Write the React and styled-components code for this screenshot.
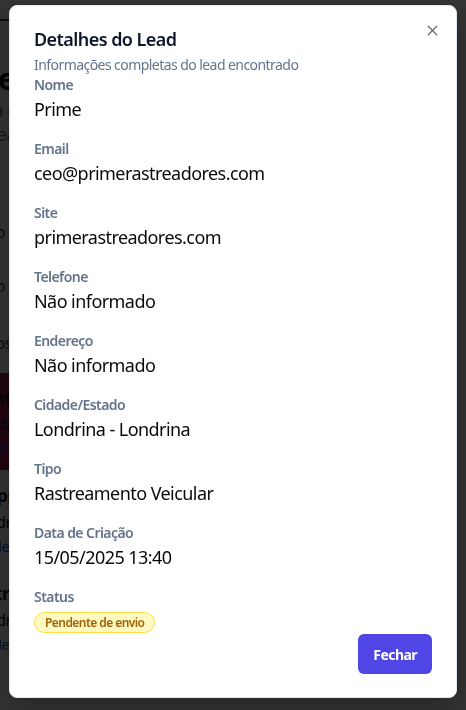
import React from 'react';
import styled, { createGlobalStyle } from 'styled-components';
import { X } from 'lucide-react';

const GlobalStyle = createGlobalStyle`
	* { box-sizing: border-box; }
	html, body {
		margin: 0;
		padding: 0;
		background: #ffffff;
		font-family: 'Noto Sans', 'Open Sans', sans-serif;
		letter-spacing: -0.035em;
		overflow: hidden;
	}
`;

// página de fundo (fica atrás do overlay)
const Page = styled.div`
	width: 466px;
	height: 710px;
	margin-left: -30px;
	display: flex;
	flex-direction: column;
	color: #0f172a;
`;
const TopBar = styled.div`
	height: 21px;
	border-bottom: 2px solid #166534;
`;
const PageHead = styled.div`
	padding: 40px 0 0 0;
	display: flex;
	flex-direction: column;
	gap: 2px;
`;
const PageTitle = styled.div`
	font-size: 30px;
	font-weight: 700;
	line-height: 36px;
`;
const PageSub = styled.div`
	font-size: 18px;
	color: #64748b;
	line-height: 22px;
`;
const Row = styled.div`
	height: ${props => props.h || 54}px;
	display: flex;
	align-items: center;
	justify-content: space-between;
	border-bottom: 1px solid #e2e8f0;
	font-size: 16px;
	color: #334155;
`;
const Card = styled.div`
	display: flex;
	flex-direction: column;
	padding: 12px 0;
	gap: 4px;
	background: ${props => props.bg || 'transparent'};
	border-bottom: 1px solid #e2e8f0;
	font-size: 16px;
	span:first-child {
		font-weight: 700;
		font-size: 18px;
	}
	span:last-child {
		color: #1d4ed8;
		font-size: 14px;
	}
`;
const Overlay = styled.div`
	position: fixed;
	inset: 0;
	background: rgba(0, 0, 0, 0.8);
`;

// modal
const Dialog = styled.div`
	position: fixed;
	left: 9px;
	top: 5px;
	width: 448px;
	height: 693px;
	background: #ffffff;
	border: 1px solid #e2e8f0;
	border-radius: 8px;
	box-shadow: 0 10px 25px rgba(0, 0, 0, 0.25);
	padding: 22px 24px 23px 24px;
	display: flex;
	flex-direction: column;
`;
const CloseBtn = styled.button`
	position: absolute;
	top: 15px;
	right: 15px;
	width: 18px;
	height: 18px;
	padding: 0;
	border: none;
	background: transparent;
	color: #3f3f46;
	opacity: 0.8;
	display: flex;
	align-items: center;
	justify-content: center;
`;
const Header = styled.div`
	display: flex;
	flex-direction: column;
	gap: 5px;
`;
const Title = styled.h2`
	margin: 0;
	font-size: 18px;
	line-height: 22px;
	font-weight: 600;
	color: #0f172a;
`;
const Description = styled.p`
	margin: 0;
	font-size: 14px;
	line-height: 20px;
	color: #64748b;
`;
const Fields = styled.div`
	display: flex;
	flex-direction: column;
	gap: 16px;
`;
const Field = styled.div`
	display: flex;
	flex-direction: column;
`;
const Label = styled.div`
	font-size: 14px;
	line-height: 20px;
	font-weight: 600;
	color: #64748b;
`;
const Value = styled.div`
	font-size: 18px;
	line-height: 28px;
	color: #0a0a0a;
`;
const Badge = styled.span`
	display: inline-flex;
	align-self: flex-start;
	align-items: center;
	margin-top: 5px;
	height: 21px;
	padding: 0 10px;
	border-radius: 999px;
	border: 1px solid #fde047;
	background: #fef9c3;
	color: #a16207;
	font-size: 12px;
	font-weight: 600;
`;
const Footer = styled.div`
	margin-top: auto;
	display: flex;
	justify-content: flex-end;
`;
const Button = styled.button`
	height: 40px;
	padding: 0 15px;
	border: none;
	border-radius: 6px;
	background: #4f46e5;
	color: #ffffff;
	font-family: inherit;
	letter-spacing: inherit;
	font-size: 14px;
	font-weight: 700;
`;

const lead = [
	{ label: 'Nome', value: 'Prime' },
	{ label: 'Email', value: 'ceo@primerastreadores.com' },
	{ label: 'Site', value: 'primerastreadores.com' },
	{ label: 'Telefone', value: 'Não informado' },
	{ label: 'Endereço', value: 'Não informado' },
	{ label: 'Cidade/Estado', value: 'Londrina - Londrina' },
	{ label: 'Tipo', value: 'Rastreamento Veicular' },
	{ label: 'Data de Criação', value: '15/05/2025 13:40' },
];

function App() {
	return (
		<>
			<GlobalStyle />
			<Page>
				<TopBar />
				<PageHead>
					<PageTitle>Meus Leads</PageTitle>
					<PageSub>Veja e gerencie</PageSub>
					<PageSub>os leads encontrados</PageSub>
				</PageHead>
				<Row h={60} />
				<Row>
					<span>Filtro</span>
					<span>Enviado</span>
				</Row>
				<Row>
					<span>Filtro</span>
				</Row>
				<Row h={60}>
					<span>Todos</span>
					<span>Mais</span>
				</Row>
				<Card bg="#9d174d">
					<span>Prime Rastreadores</span>
					<span>Londrina</span>
					<span>Pendente</span>
				</Card>
				<Card>
					<span>Empresa</span>
					<span>Londrina</span>
					<span>Pendente</span>
				</Card>
				<Card>
					<span>Outra</span>
					<span>Londrina</span>
					<span>Pendente</span>
				</Card>
			</Page>
			<Overlay />
			<Dialog>
				<CloseBtn aria-label="Fechar">
					<X size={17} strokeWidth={1.7} />
				</CloseBtn>
				<Header>
					<Title>Detalhes do Lead</Title>
					<Description>Informações completas do lead encontrado</Description>
				</Header>
				<Fields>
					{lead.map(item => (
						<Field key={item.label}>
							<Label>{item.label}</Label>
							<Value>{item.value}</Value>
						</Field>
					))}
					<Field>
						<Label>Status</Label>
						<Badge>Pendente de envio</Badge>
					</Field>
				</Fields>
				<Footer>
					<Button>Fechar</Button>
				</Footer>
			</Dialog>
		</>
	);
}

export default App;
